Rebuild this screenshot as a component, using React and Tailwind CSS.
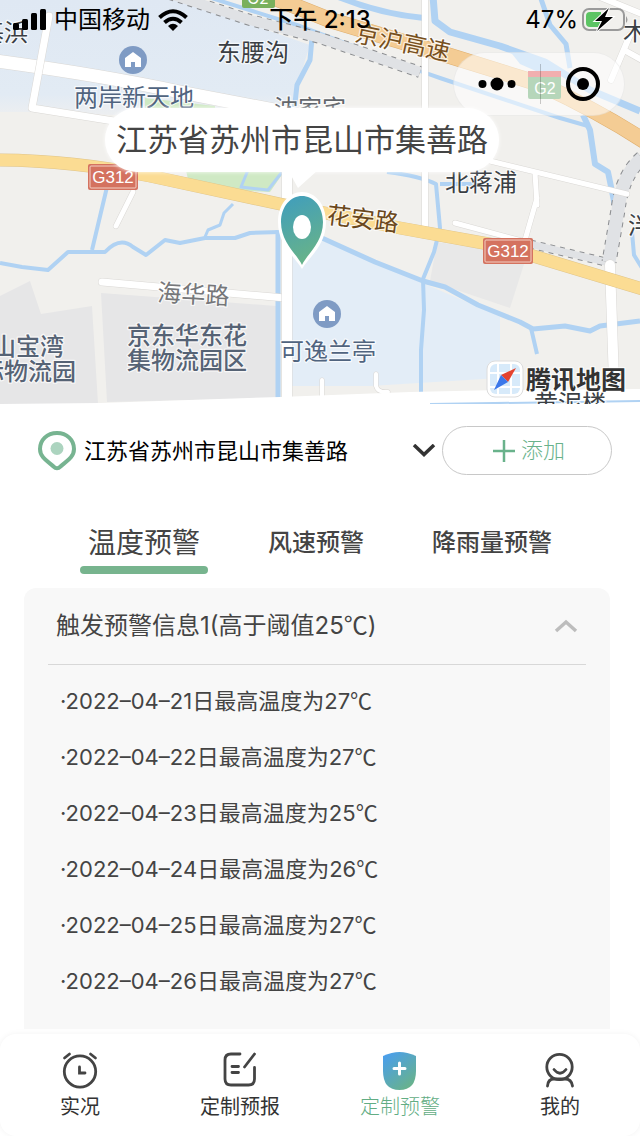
import React from "react";

const records = [
  ["2022–04–21", "27"],
  ["2022–04–22", "27"],
  ["2022–04–23", "25"],
  ["2022–04–24", "26"],
  ["2022–04–25", "27"],
  ["2022–04–26", "27"],
];

function Celsius() {
  return <span className="font-['Noto_Sans_CJK_SC',sans-serif] leading-none">℃</span>;
}

function River({ d, w = 5 }) {
  return <path d={d} fill="none" stroke="#b0d2f3" strokeWidth={w} strokeLinejoin="round" />;
}

function Road({ d, w = 6, color = "#ffffff", edge = "#dad8d5" }) {
  return (
    <g fill="none" strokeLinejoin="round" strokeLinecap="round">
      <path d={d} stroke={edge} strokeWidth={w + 1} />
      <path d={d} stroke={color} strokeWidth={w} />
    </g>
  );
}

function Rail({ d, w = 10 }) {
  return (
    <g fill="none">
      <path d={d} stroke="#8b8d90" strokeWidth={w + 1} strokeDasharray="5 5" />
      <path d={d} stroke="#e0e2e5" strokeWidth={w - 1} />
    </g>
  );
}

function Label({ x, y, children, fill = "#3b3f44", weight = 400, anchor = "start", size = 24, rotate = 0 }) {
  return (
    <text
      x={x}
      y={y}
      fill={fill}
      fontSize={size}
      fontWeight={weight}
      textAnchor={anchor}
      stroke="#ffffff"
      strokeOpacity="0.7"
      strokeWidth="2.500"
      strokeLinejoin="round"
      paintOrder="stroke"
      transform={rotate ? `rotate(${rotate} ${x} ${y})` : undefined}
    >
      {children}
    </text>
  );
}

function Shield({ x, y }) {
  return (
    <g>
      <rect x={x} y={y} width="50" height="26" rx="2" fill="#d4725f" />
      <rect x={x + 2} y={y + 2} width="46" height="22" rx="1" fill="none" stroke="#f3cfc4" />
      <text x={x + 25} y={y + 19} fill="#fff" fontSize="17" textAnchor="middle" fontFamily="Liberation Sans, sans-serif">G312</text>
    </g>
  );
}

function HouseMark({ x, y }) {
  return (
    <g>
      <circle cx={x} cy={y} r="14" fill="#7f9bc4" />
      <path d={`M${x} ${y - 8}l8 6v9h-6v-5h-4v5h-6v-9z`} fill="#fff" />
    </g>
  );
}

function MapCanvas() {
  return (
    <svg viewBox="0 0 640 404" preserveAspectRatio="xMidYMid slice" className="absolute inset-0 h-full w-full" role="img" aria-label="地图">
      <defs>
        <linearGradient id="town" x1="0" y1="0" x2="0" y2="1">
          <stop offset="0" stopColor="#dfe8f3" />
          <stop offset="0.8" stopColor="#e2ebf4" />
          <stop offset="1" stopColor="#eeeff0" />
        </linearGradient>
        <linearGradient id="pin" x1="0" y1="0" x2="0.3" y2="1">
          <stop offset="0" stopColor="#3f9dbe" />
          <stop offset="1" stopColor="#66b28b" />
        </linearGradient>
      </defs>
      <rect width="640" height="404" fill="#f1f0ed" />
      <path d="M0 0H180L310 45L290 108L200 118L30 112H0z" fill="url(#town)" />
      <path d="M185 166H288L270 192L190 188zM145 98L215 106V112H145z" fill="#cfe9c4" />
      <path d="M0 296L30 281L41 314L92 306L98 404H0zM101 293L276 306V398L107 402z" fill="#e6e6e7" />
      <path d="M437 242L490 250L526 258L510 308L430 281z" fill="#e8e8e8" />
      <path d="M292 228L420 282L500 316V378L370 386H292z" fill="#e3edf7" />

      <River d="M312 38L310 60L297 85L294 112" />
      <River d="M205 -4L300 26L420 71L440 78L560 118L588 126" w={4} />
      <River d="M336 -4Q380 14 424 18" w={6} />
      <River d="M433 -4L435 21L450 32L500 46L545 62L590 90L640 111" w={7} />
      <path d="M505 45L545 60L570 75L545 75L520 64z" fill="#b0d2f3" />
      <River d="M540 -4L550 25L566 44L570 68" w={5} />
      <River d="M583 115L590 130L595 164L608 172L615 206" w={6} />
      <River d="M248 170L241 187L268 190L282 172" w={3} />
      <River d="M107 187L92 250M0 263L22 267L48 270L68 252L105 252Q120 236 133 247L146 255L165 240L180 243L205 238L235 238L250 233L280 232" w={4} />
      <River d="M205 237L208 230L220 225L224 213L233 204" w={3} />
      <River d="M278 230V400" w={5} />
      <River d="M387 172Q420 176 436 184L440 228L434 252L423 279L424 310L421 350V395M440 184H475" w={4} />
      <River d="M322 238L375 262L423 281L445 287L478 305L520 322L533 329L565 326L590 331L600 326L640 321" w={5} />
      <River d="M531 328L537 354M632 232L634 255L642 268M614 196V208" w={4} />

      <Rail d="M170 -6L250 20L320 38L420 72" w={11} />
      <Rail d="M530 244L606 262" w={8} />
      <Rail d="M642 158Q622 175 618 210L609 262" w={14} />

      <Road d="M-4 61Q100 75 180 92L300 115" w={13} />
      <Road d="M49 16L32 108L120 122" w={7} />
      <Road d="M425 -4V228" w={6} />
      <Road d="M133 192L116 226" w={5} />
      <Road d="M102 282L285 298" w={7} />
      <Road d="M455 223L522 241M537 198L525 240M490 161L627 194M535 173L537 205" w={5} />
      <Road d="M642 28L630 35L611 80M624 50L642 60M600 -3L642 14" w={6} />
      <Road d="M610 265L615 410" w={10} />
      <Road d="M287 170V410" w={10} />
      <Road d="M322 380V398M376 374V386Q378 393 388 392" w={4} />
      <path d="M0 404L100 403L280 397L410 392L500 390L640 389V404z" fill="#fff" />
      <path d="M640 401L430 404" stroke="#b0d2f3" strokeWidth="2" />

      <Road d="M260 -8L330 20L450 56L540 84Q600 112 646 142" w={15} color="#f4cc94" edge="#dfae6c" />
      <Road d="M-4 160Q70 160 150 176L280 204L400 228L500 246L646 290" w={12} color="#fbdc93" edge="#dfc48a" />

      <rect x="242" y="-16" width="33" height="24" rx="2" fill="#79b05d" />
      <text x="258" y="4" textAnchor="middle" fontSize="16" fill="#fff">G2</text>
      <rect x="528" y="71" width="33" height="28" rx="2" fill="#5da466" />
      <rect x="528" y="71" width="33" height="6" fill="#e04f4f" />
      <text x="545" y="94" textAnchor="middle" fontSize="16" fill="#fff" fontFamily="Liberation Sans, sans-serif">G2</text>
      <Shield x={88} y={164} />
      <Shield x={483} y={238} />
      <HouseMark x={133} y={60} />
      <HouseMark x={327} y={314} />

      <Label x={28} y={41} anchor="end">基浜</Label>
      <Label x={217} y={61}>东腰沟</Label>
      <Label x={74} y={106} fill="#50647f">两岸新天地</Label>
      <Label x={274} y={117} fill="#62666b">沈家宅</Label>
      <Label x={445} y={191}>北蒋浦</Label>
      <Label x={623} y={40}>木</Label>
      <Label x={628} y={234}>泮</Label>
      <Label x={354} y={41} fill="#77501d" rotate={12}>京沪高速</Label>
      <Label x={326} y={223} fill="#6b481c" rotate={7}>花安路</Label>
      <Label x={157} y={301} fill="#76777a" rotate={3}>海华路</Label>
      <Label x={127} y={344} fill="#566375" weight={500}>京东华东花</Label>
      <Label x={127} y={369} fill="#566375" weight={500}>集物流园区</Label>
      <Label x={64} y={355} anchor="end" fill="#566375" weight={500}>昆山宝湾</Label>
      <Label x={76} y={380} anchor="end" fill="#566375" weight={500}>国际物流园</Label>
      <Label x={280} y={360} fill="#50647f">可逸兰亭</Label>
      <Label x={534} y={412}>黄泥楼</Label>

      <path d="M288 170H318L298 188z" fill="#fff" />
      <path d="M302 269C296 258 278 246 278 222C278 204 289 192 302 192S326 204 326 222C326 246 308 258 302 269z" fill="#fff" />
      <path d="M302 265C297 254 281 243 281 222C281 206 291 196 302 196S323 206 323 222C323 243 307 254 302 265z" fill="url(#pin)" />
      <ellipse cx="302" cy="227" rx="9" ry="12" fill="#fff" />

      <rect x="487" y="361" width="36" height="36" rx="8" fill="#fff" stroke="#dcdcdc" />
      <rect x="490" y="364" width="30" height="30" rx="6" fill="#d7eafa" />
      <path d="M498 364V394M511 364V394M490 373H520M490 387H520" stroke="#fff" strokeWidth="2" />
      <path d="M516 368L501 375L508 382z" fill="#e4432f" />
      <path d="M494 390L501 375L508 382z" fill="#3b78ea" />
      <Label x={526} y={389} size={25} weight={700} fill="#333333">腾讯地图</Label>
    </svg>
  );
}

function StatusBar() {
  return (
    <div className="relative grid h-10 grid-cols-[1fr_auto_1fr] items-center px-3 text-[24px] leading-10 text-black">
      <div className="flex items-center gap-2">
        <svg viewBox="0 0 34 22" className="h-[22px] w-[34px]" aria-hidden="true">
          <rect x="1" y="14" width="6" height="7" rx="1.500" />
          <rect x="10" y="10" width="6" height="11" rx="1.500" />
          <rect x="19" y="4" width="6" height="17" rx="1.500" />
          <rect x="28" y="0" width="6" height="21" rx="1.500" />
        </svg>
        <span>中国移动</span>
        <svg viewBox="0 0 30 22" className="h-[22px] w-[30px]" fill="none" stroke="#000" strokeWidth="4" aria-hidden="true">
          <path d="M1.500 8.500Q15-4 28.500 8.500M6.500 13.500Q15 6 23.500 13.500" />
          <path d="M10 17Q15 12.500 20 17L15 22z" fill="#000" stroke="none" />
        </svg>
      </div>
      <span className="font-medium">下午 2:13</span>
      <div className="flex items-center justify-end gap-1">
        <span>47%</span>
        <svg viewBox="0 0 46 24" className="h-6 w-[46px]" aria-hidden="true">
          <rect x="1" y="1" width="41" height="21" rx="6" fill="none" stroke="#9a9a9a" strokeWidth="2" />
          <path d="M8 4h11v15H8q-4 0-4-4V8q0-4 4-4z" fill="#5cc463" />
          <path d="M44 8q3 4 0 7z" fill="#9a9a9a" />
          <path d="M27 0L13 13H20L15 23L31 9H23z" fill="#000" stroke="#fff" strokeWidth="2" paintOrder="stroke" />
        </svg>
      </div>
    </div>
  );
}

function Capsule() {
  return (
    <div className="absolute top-[52px] right-[15px] flex h-16 w-[172px] items-center justify-center gap-6 rounded-full border border-black/5 bg-white/55">
      <button type="button" aria-label="更多">
        <svg viewBox="0 0 38 14" className="h-[14px] w-[38px]"><circle cx="4.500" cy="7" r="4" /><circle cx="19" cy="7" r="6.500" /><circle cx="33.500" cy="7" r="4" /></svg>
      </button>
      <span className="h-10 w-px bg-black/20" />
      <button type="button" aria-label="关闭">
        <svg viewBox="0 0 36 36" className="size-9"><circle cx="18" cy="18" r="15" fill="none" stroke="#000" strokeWidth="4" /><circle cx="18" cy="18" r="6" /></svg>
      </button>
    </div>
  );
}

function ClockIcon() {
  return (
    <svg viewBox="0 0 40 40" className="size-10" fill="none" stroke="#444" strokeWidth="2.800" strokeLinecap="round" aria-hidden="true">
      <circle cx="20" cy="20.500" r="15.700" />
      <path d="M4.500 7L9.500 3M30.500 3L35.500 7M19.500 16V22H25" />
    </svg>
  );
}

function NoteIcon() {
  return (
    <svg viewBox="0 0 40 40" className="size-10" fill="none" stroke="#444" strokeWidth="2.800" strokeLinecap="round" aria-hidden="true">
      <path d="M20 3H11Q5 3 5 9V28Q5 34 11 34H28.500Q34.500 34 34.500 28V16.500M34.500 3L24.500 16M12 15.500H18.500M12 21.500H18.500" />
    </svg>
  );
}

function ShieldIcon() {
  return (
    <svg viewBox="0 0 40 40" className="size-10" aria-hidden="true">
      <defs>
        <linearGradient id="guard" x1="0" y1="0" x2="0.7" y2="1">
          <stop offset="0" stopColor="#489df4" />
          <stop offset="1" stopColor="#68b28c" />
        </linearGradient>
      </defs>
      <path d="M3 5Q12 1 19.500 1T36 5V20Q36 39 19.500 39T3 20z" fill="url(#guard)" />
      <path d="M19.500 12V23M14 17.500H25" stroke="#fff" strokeWidth="3" strokeLinecap="round" />
    </svg>
  );
}

function PersonIcon() {
  return (
    <svg viewBox="0 0 40 40" className="size-10" fill="none" stroke="#444" strokeWidth="2.800" strokeLinecap="round" aria-hidden="true">
      <circle cx="19.500" cy="16" r="12.700" />
      <path d="M14 18.500Q20 26 26 18.500M7.500 35Q8 28 14 28H25Q31.500 28 32.500 35" />
    </svg>
  );
}

const navItems = [
  { name: "实况", Icon: ClockIcon },
  { name: "定制预报", Icon: NoteIcon },
  { name: "定制预警", Icon: ShieldIcon, active: true },
  { name: "我的", Icon: PersonIcon },
];

export default function App() {
  return (
    <div className="flex min-h-screen flex-col bg-white font-['Inter','Noto_Sans_CJK_SC',sans-serif] text-[#444]">
      <header className="relative h-[404px] overflow-hidden">
        <MapCanvas />
        <StatusBar />
        <Capsule />
        <p className="absolute top-[108px] left-1/2 flex h-16 w-[394px] -translate-x-[215px] items-center justify-center rounded-full bg-white text-[31px] whitespace-nowrap text-[#444] shadow-[0_0_4px_rgba(255,255,255,0.9)]">
          江苏省苏州市昆山市集善路
        </p>
      </header>

      <main className="flex-1">
        <div className="flex items-center pt-[22px] pr-7 pl-9">
          <button type="button" className="flex flex-1 items-center gap-1.5 text-[22px] leading-8 text-black">
            <svg viewBox="0 0 42 42" className="size-[42px]" fill="none" aria-hidden="true">
              <path d="M21 3C11 3 4 10 4 19C4 28 13 32 17.500 36.500Q21 40 24.500 36.500C29 32 38 28 38 19C38 10 31 3 21 3z" stroke="#77b491" strokeWidth="4" />
              <circle cx="21" cy="18.500" r="6.500" fill="#acd4bf" />
            </svg>
            <span>江苏省苏州市昆山市集善路</span>
            <svg viewBox="0 0 24 14" className="mr-1.5 ml-auto h-[14px] w-6" fill="none" stroke="#333" strokeWidth="3.500" aria-hidden="true">
              <path d="M2 1L12 10.500L22 1" />
            </svg>
          </button>
          <button type="button" className="flex h-[49px] w-[170px] items-center justify-center gap-1.5 rounded-full border border-[#c8c8c8] pl-1 text-[22px] font-light text-[#69b28b]">
            <svg viewBox="0 0 22 22" className="size-[22px]" stroke="#69b28b" strokeWidth="2.500" aria-hidden="true"><path d="M11 0V22M0 11H22" /></svg>
            <span>添加</span>
          </button>
        </div>

        <div role="tablist" className="flex items-start pt-12 pl-20 text-[24px] leading-10 font-medium">
          <button type="button" role="tab" aria-selected="true" className="flex w-32 flex-col items-center gap-[3px] text-[28px] font-normal">
            温度预警
            <span className="h-2 w-full rounded-full bg-[#77b48e]" />
          </button>
          <button type="button" role="tab" aria-selected="false" className="ml-15">风速预警</button>
          <button type="button" role="tab" aria-selected="false" className="ml-17">降雨量预警</button>
        </div>

        <section className="mt-3.5 mr-[30px] ml-6 rounded-t-xl bg-[#f8f8f8] px-6 pb-5">
          <button type="button" aria-expanded="true" className="flex h-[77px] w-full items-center justify-between border-b border-[#d8d8d8] px-2 text-[24px]">
            <span>触发预警信息1(高于阈值25<Celsius />)</span>
            <svg viewBox="0 0 24 14" className="h-[14px] w-6" fill="none" stroke="#bdbdbd" strokeWidth="3.500" aria-hidden="true">
              <path d="M2 12L12 3L22 12" />
            </svg>
          </button>
          <ul className="px-3 pt-2 text-[22px] leading-[56px]">
            {records.map(([date, value]) => (
              <li key={date}>·{date}日最高温度为{value}<Celsius /></li>
            ))}
          </ul>
        </section>
      </main>

      <nav className="sticky bottom-0 rounded-2xl bg-white shadow-[0_0_6px_rgba(0,0,0,0.05)]">
        <ul className="grid h-[102px] grid-cols-4 text-[20px] leading-7 text-[#333]">
          {navItems.map(({ name, Icon, active }) => (
            <li key={name}>
              <a href="#" aria-current={active ? "page" : undefined} className={active ? "flex flex-col items-center gap-0.5 pt-[17px] font-light text-[#62ad84]" : "flex flex-col items-center gap-0.5 pt-[17px]"}>
                <Icon />
                {name}
              </a>
            </li>
          ))}
        </ul>
      </nav>
    </div>
  );
}
